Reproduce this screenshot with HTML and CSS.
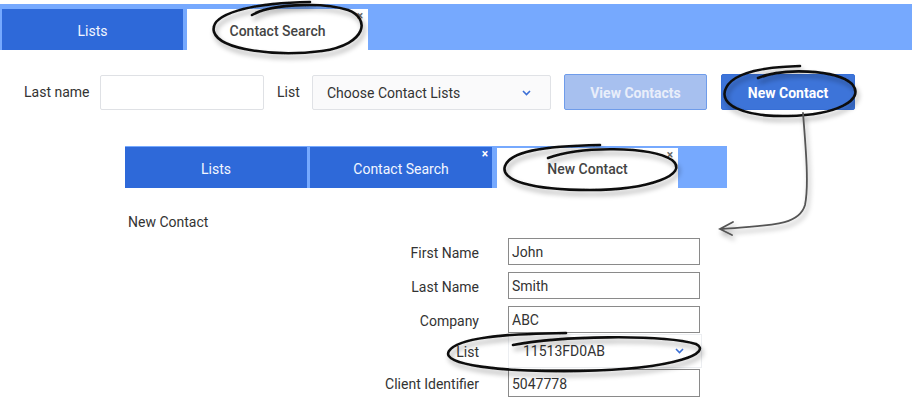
FILE: index.html
```html
<!DOCTYPE html>
<html lang="en">
<head>
    <meta charset="UTF-8">
    <meta name="viewport" content="width=device-width, initial-scale=1.0">
    <title>New Contact</title>
    <link rel="stylesheet" href="styles.css">
</head>
<body>
<div class="page">

    <div class="tabbar tabbar-top">
        <div class="tab">Lists</div>
        <div class="tab active">Contact Search<span class="close">&times;</span></div>
    </div>

    <div class="search-row">
        <label class="search-label label-last">Last name</label>
        <input type="text" class="search-input">
        <label class="search-label label-list">List</label>
        <div class="select select-lists">
            <span>Choose Contact Lists</span>
            <svg class="chevron" width="9" height="6" viewBox="0 0 9 6"><path d="M1 1 L4.5 4.5 L8 1" fill="none" stroke="#3b6fd6" stroke-width="1.6"/></svg>
        </div>
        <button class="btn btn-disabled">View Contacts</button>
        <button class="btn btn-primary">New Contact</button>
    </div>

    <div class="panel">
        <div class="tabbar tabbar-inner">
            <div class="tab tab-lists">Lists</div>
            <div class="tab tab-search">Contact Search<span class="close close-light">&times;</span></div>
            <div class="tab active tab-new">New Contact<span class="close">&times;</span></div>
        </div>

        <h2 class="panel-title">New Contact</h2>

        <div class="contact-form">
            <div class="form-row">
                <label>First Name</label>
                <input type="text" value="John">
            </div>
            <div class="form-row">
                <label>Last Name</label>
                <input type="text" value="Smith">
            </div>
            <div class="form-row row-company">
                <label>Company</label>
                <input type="text" value="ABC">
            </div>
            <div class="form-row row-list">
                <label>List</label>
                <div class="select select-form">
                    <span>11513FD0AB</span>
                    <svg class="chevron" width="9" height="6" viewBox="0 0 9 6"><path d="M1 1 L4.5 4.5 L8 1" fill="none" stroke="#3b6fd6" stroke-width="1.6"/></svg>
                </div>
            </div>
            <div class="form-row row-client">
                <label>Client Identifier</label>
                <input type="text" value="5047778">
            </div>
        </div>
    </div>

    <!-- hand-drawn callouts over the screenshot -->
    <svg class="annotations" width="912" height="412" viewBox="0 0 912 412">
        <defs>
            <filter id="shade" x="-20%" y="-40%" width="140%" height="180%">
                <feDropShadow dx="2" dy="4" stdDeviation="2.5" flood-color="#000" flood-opacity="0.35"/>
            </filter>
        </defs>
        <g fill="none" stroke="#111" stroke-width="2.6" stroke-linecap="round" filter="url(#shade)">
            <path d="M252 15 C268 5 320 1 348 10 C370 18 368 44 322 51 C276 57 220 50 214 32 C209 14 250 3 310 2"/>
            <path d="M758 78 C782 68 836 69 852 84 C866 100 836 115 788 116 C742 117 718 104 726 88 C733 73 760 67 800 66"/>
            <path d="M548 158 C580 146 650 146 672 160 C690 174 650 190 590 190 C530 190 500 180 505 166 C510 152 540 146 600 145"/>
            <path d="M513 345 C560 336 660 334 696 344 C712 352 680 369 580 371 C500 372 440 365 449 351 C458 338 500 334 566 333"/>
        </g>
        <g fill="none" stroke="#555" stroke-width="1.8" stroke-linecap="round" filter="url(#shade)">
            <path d="M803 113 C806 150 809 186 805 205 C799 226 770 225 722 229"/>
            <path d="M733 222 L720 229 L732 235"/>
        </g>
    </svg>
</div>
</body>
</html>
```

FILE: styles.css
```css
body {
    margin: 0;
    font-family: Roboto, 'Liberation Sans', Arial, sans-serif;
    font-size: 14px;
    color: #333;
    background-color: #fff;
}
.page {
    position: relative;
    width: 912px;
    height: 412px;
    overflow: hidden;
}
.tabbar {
    display: flex;
    background-color: #76a9fe;
    box-sizing: border-box;
}
.tab {
    position: relative;
    display: flex;
    align-items: center;
    justify-content: center;
    padding-top: 2px;
    box-sizing: border-box;
    background-color: #2e69d9;
    color: #f2f6ff;
    font-size: 14px;
}
.tab.active {
    background-color: #fff;
    color: #444;
    font-weight: 500;
}
.close {
    position: absolute;
    top: 1px;
    right: 5px;
    font-size: 12px;
    font-weight: bold;
    color: #666;
    line-height: 12px;
}
.close-light {
    color: #fff;
    right: 4px;
}
/* --- top bar --- */
.tabbar-top {
    margin-top: 4px;
    height: 46px;
    padding: 5px 0 0 2px;
    gap: 4px;
}
.tabbar-top .tab {
    width: 181px;
}
/* --- search row --- */
.search-row {
    display: flex;
    align-items: center;
    margin-top: 24px;
    height: 36px;
    padding-left: 24px;
}
.search-label {
    font-size: 14px;
    color: #333;
}
.label-last {
    width: 76px;
}
.label-list {
    width: 35px;
    margin-left: 13px;
}
.search-input {
    width: 164px;
    height: 35px;
    box-sizing: border-box;
    border: 1px solid #dfe1e5;
    border-radius: 2px;
    outline: none;
}
.select {
    display: flex;
    align-items: center;
    justify-content: space-between;
    box-sizing: border-box;
    color: #333;
}
.select-lists {
    width: 239px;
    height: 35px;
    background-color: #fafafb;
    border: 1px solid #e0e2e6;
    border-radius: 2px;
    padding: 2px 19px 0 14px;
}
.btn {
    height: 36px;
    box-sizing: border-box;
    border-radius: 2px;
    font-family: Roboto, 'Liberation Sans', Arial, sans-serif;
    font-size: 14px;
    font-weight: bold;
    padding: 2px 0 0;
}
.btn-disabled {
    width: 143px;
    margin-left: 13px;
    background-color: #a7c0ef;
    border: 1px solid #6f9cea;
    color: #e9eefa;
}
.btn-primary {
    width: 134px;
    margin-left: 14px;
    background-color: #3d74d9;
    border: 1px solid #386fd6;
    color: #fff;
}
/* --- inner panel --- */
.panel {
    margin: 36px 0 0 125px;
}
.tabbar-inner {
    width: 602px;
    height: 42px;
    padding-top: 1px;
}
.tab-lists {
    width: 182px;
}
.tab-search {
    width: 182px;
    margin-left: 3px;
}
.tab-new {
    width: 181px;
    margin: 1px 0 0 5px;
}
.panel-title {
    margin: 26px 0 0 3px;
    font-size: 14px;
    font-weight: normal;
    line-height: 16px;
    color: #333;
}
.contact-form {
    margin-top: 8px;
}
.form-row {
    display: flex;
    align-items: center;
    height: 27px;
    margin-bottom: 7px;
}
.form-row label {
    width: 354px;
    margin-right: 29px;
    padding-top: 2px;
    text-align: right;
    color: #333;
}
.form-row input {
    width: 192px;
    height: 100%;
    box-sizing: border-box;
    border: 1px solid #8a8a8a;
    padding: 1px 3px 0;
    font-family: Roboto, 'Liberation Sans', Arial, sans-serif;
    font-size: 14px;
    color: #333;
    outline: none;
}
.row-company {
    margin-bottom: 1px;
}
.row-list {
    height: 34px;
    margin-bottom: 1px;
}
.select-form {
    width: 194px;
    height: 34px;
    background-color: #fff;
    border: 1px solid #eceef1;
    padding: 0 17px 0 14px;
}
.row-client {
    height: 28px;
}
.annotations {
    position: absolute;
    top: 0;
    left: 0;
    pointer-events: none;
}
```
